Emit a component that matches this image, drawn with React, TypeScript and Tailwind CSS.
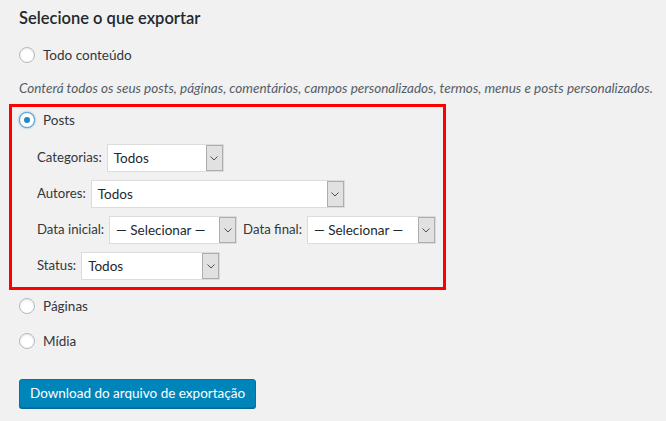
import React from 'react';

function Radio({ checked = false, label }: { checked?: boolean; label: string }) {
  return (
    <label className="flex items-center gap-[8px]">
      <span
        className={
          checked
            ? 'flex h-[16px] w-[16px] shrink-0 items-center justify-center rounded-full border border-[#5b9dd9] bg-white shadow-[0_0_2px_rgba(30,140,190,0.8)]'
            : 'flex h-[16px] w-[16px] shrink-0 items-center justify-center rounded-full border border-[#b4b9be] bg-white shadow-[inset_0_1px_2px_rgba(0,0,0,0.1)]'
        }
      >
        {checked && <span className="h-[6px] w-[6px] rounded-full bg-[#1e8cbe]" />}
      </span>
      <span className="whitespace-nowrap text-[13.5px] leading-[20px] text-[#32373c]">{label}</span>
    </label>
  );
}

function Select({ value, width }: { value: string; width: string }) {
  return (
    <div className={`flex h-[28px] shrink-0 items-stretch border border-[#dcdcdc] bg-white ${width}`}>
      <span className="flex flex-1 items-center overflow-hidden whitespace-nowrap pl-[6px] text-[13.5px] text-[#23282d]">
        {value}
      </span>
      <span className="flex w-[17px] shrink-0 items-center justify-center border border-[#adadad] bg-[#e1e1e1]">
        <svg width="8" height="5" viewBox="0 0 8 5" fill="none">
          <path d="M0.5 0.5 L4 4 L7.5 0.5" stroke="#505050" strokeWidth="1" />
        </svg>
      </span>
    </div>
  );
}

function Field({ label, children }: { label: string; children: React.ReactNode }) {
  return (
    <div className="flex items-center gap-[5px]">
      <span className="whitespace-nowrap text-[13.2px] text-[#32373c]">{label}</span>
      {children}
    </div>
  );
}

export default function App() {
  return (
    <div className="min-h-screen bg-[#f1f1f1] pl-[19px] pt-[7px] font-['Lato','Open_Sans',sans-serif]">
      {/* Heading */}
      <h2 className="text-[16.5px] font-semibold leading-[22px] text-[#23282d]">Selecione o que exportar</h2>

      <div className="mt-[16px]">
        <Radio label="Todo conteúdo" />
      </div>

      <p className="mt-[13px] whitespace-nowrap text-[13.5px] italic leading-[20px] text-[#555d66]">
        Conterá todos os seus posts, páginas, comentários, campos personalizados, termos, menus e posts personalizados.
      </p>

      {/* Posts filters */}
      <div className="-ml-[10px] mt-[6px] w-[437px] border-[3px] border-[#ff0000] pb-[7px] pl-[7px] pt-[3px]">
        <Radio checked label="Posts" />
        <div className="ml-[18px] mt-[14px] flex flex-col gap-[8px]">
          <Field label="Categorias:">
            <Select value="Todos" width="w-[117px]" />
          </Field>
          <Field label="Autores:">
            <Select value="Todos" width="w-[254px]" />
          </Field>
          <div className="flex items-center gap-[6px]">
            <Field label="Data inicial:">
              <Select value="— Selecionar —" width="w-[128px]" />
            </Field>
            <Field label="Data final:">
              <Select value="— Selecionar —" width="w-[129px]" />
            </Field>
          </div>
          <Field label="Status:">
            <Select value="Todos" width="w-[139px]" />
          </Field>
        </div>
      </div>

      <div className="mt-[6px]">
        <Radio label="Páginas" />
      </div>
      <div className="mt-[15px]">
        <Radio label="Mídia" />
      </div>

      <button className="mt-[28px] h-[29px] whitespace-nowrap rounded-[3px] border border-[#0073aa] bg-[#0085ba] px-[10px] text-[13.5px] text-white shadow-[0_1px_0_#006799]">
        Download do arquivo de exportação
      </button>
    </div>
  );
}
